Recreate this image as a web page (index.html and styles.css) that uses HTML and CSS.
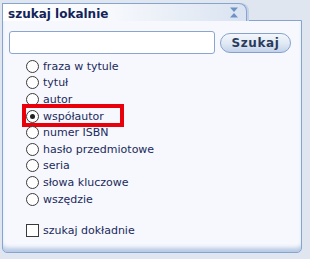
FILE: index.html
```html
<!DOCTYPE html>
<html lang="pl">
<head>
  <meta charset="UTF-8" />
  <title>szukaj lokalnie</title>
  <link rel="stylesheet" href="styles.css">
</head>
<body>
  <div class="box">
    <div class="tab">
      <h2>szukaj lokalnie</h2>
      <svg class="toggle" width="10" height="11" viewBox="0 0 10 11">
        <path d="M1 0.5H9L5 5Z M5 6L9 10.5H1Z" fill="#6f92c6" />
      </svg>
    </div>

    <div class="content">
      <div class="search">
        <input type="text" class="query" />
        <button class="go">Szukaj</button>
      </div>

      <ul class="options">
        <li><span class="radio"></span>fraza w tytule</li>
        <li><span class="radio"></span>tytuł</li>
        <li><span class="radio"></span>autor</li>
        <li class="marked"><span class="radio checked"></span>współautor</li>
        <li><span class="radio"></span>numer ISBN</li>
        <li><span class="radio"></span>hasło przedmiotowe</li>
        <li><span class="radio"></span>seria</li>
        <li><span class="radio"></span>słowa kluczowe</li>
        <li><span class="radio"></span>wszędzie</li>
      </ul>

      <div class="exact"><span class="check"></span>szukaj dokładnie</div>
    </div>
  </div>
</body>
</html>
```

FILE: styles.css
```css
*,
*::before,
*::after {
  box-sizing: border-box;
}

body {
  margin: 0;
  height: 259px;
  background: #dfe6f0;
  font-family: "DejaVu Sans", Verdana, sans-serif;
  color: #1b2a5c;
}

.box {
  width: 300px;
  margin: 3px 0 0 2px;
}

.tab {
  position: relative;
  z-index: 1;
  display: flex;
  align-items: center;
  justify-content: space-between;
  width: 245px;
  height: 18px;
  margin-bottom: -1px;
  padding: 0 5px 0 5px;
  border: 1px solid #87a4cf;
  border-bottom: none;
  border-top-right-radius: 8px;
  background: linear-gradient(90deg, #ffffff 0%, #f6f8fc 45%, #d9e3f1 100%);
  box-shadow: 2px 0 0 #c3d2e8;
}

.tab h2 {
  margin: 2px 0 0;
  font-size: 12px;
  font-weight: bold;
  color: #13245a;
}

.toggle {
  margin-right: 2px;
}

.content {
  height: 233px;
  padding: 10px 0 0 6px;
  border: 1px solid #87a4cf;
  border-radius: 0 0 5px 5px;
  background: #f6f8fd;
  box-shadow: inset 0 -6px 4px -2px #b6c9e4;
}

.search {
  display: flex;
  align-items: center;
  gap: 5px;
}

.query {
  width: 206px;
  height: 23px;
  margin: 0;
  border: 1px solid #8aa5cf;
  border-radius: 3px;
  background: #ffffff;
}

.go {
  width: 71px;
  height: 20px;
  padding: 0;
  border: 1px solid #86a2cc;
  border-radius: 10px;
  background: linear-gradient(180deg, #f4f7fb 0%, #dfe8f4 55%, #c3d3ea 100%);
  font-family: inherit;
  font-size: 12px;
  font-weight: bold;
  letter-spacing: 0.6px;
  color: #2a3b5c;
}

.options {
  margin: 4px 0 0;
  padding: 0 0 0 17px;
  list-style: none;
}

.options li,
.exact {
  display: flex;
  align-items: center;
  gap: 4px;
  height: 16.6px;
  font-size: 11px;
}

.marked {
  position: relative;
}

.marked::after {
  content: "";
  position: absolute;
  left: -4px;
  top: -4px;
  width: 102px;
  height: 23px;
  border: 4px solid #e8000b;
}

.radio {
  position: relative;
  width: 13px;
  height: 13px;
  border: 1px solid #3a3a3a;
  border-radius: 50%;
  background: #ffffff;
}

.checked::after {
  content: "";
  position: absolute;
  left: 3px;
  top: 3px;
  width: 5px;
  height: 5px;
  border-radius: 50%;
  background: #222;
}

.exact {
  margin: 15px 0 0 17px;
}

.check {
  width: 13px;
  height: 13px;
  border: 1px solid #3a3a3a;
  background: #ffffff;
}
```
